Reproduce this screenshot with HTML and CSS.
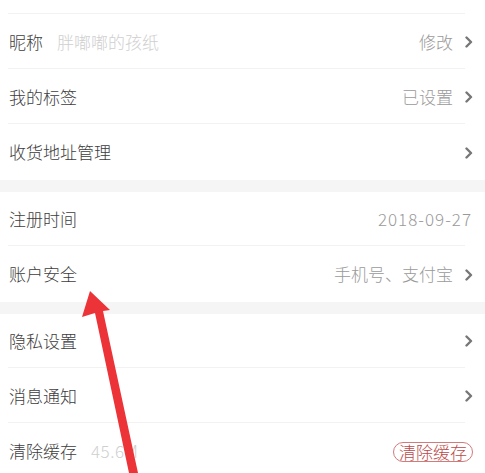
FILE: index.html
```html
<!DOCTYPE html>
<html>
<head>
    <meta charset="utf-8">
    <meta name="viewport" content="width=device-width, initial-scale=1.0">
    <title>个人资料</title>
    <link rel="stylesheet" href="styles.css">
</head>
<body>
<div class="wrap">
    <div class="group">
        <div class="row row-tail"></div>
        <div class="row">
            <span class="label">昵称</span>
            <span class="hint">胖嘟嘟的孩纸</span>
            <span class="value">修改</span>
            <svg class="arrow" viewBox="0 0 8 12"><polyline points="1.5,1.5 6,6 1.5,10.5"/></svg>
        </div>
        <div class="row">
            <span class="label">我的标签</span>
            <span class="value">已设置</span>
            <svg class="arrow" viewBox="0 0 8 12"><polyline points="1.5,1.5 6,6 1.5,10.5"/></svg>
        </div>
        <div class="row last">
            <span class="label">收货地址管理</span>
            <span class="value"></span>
            <svg class="arrow" viewBox="0 0 8 12"><polyline points="1.5,1.5 6,6 1.5,10.5"/></svg>
        </div>
    </div>
    <div class="gap"></div>
    <div class="group">
        <div class="row">
            <span class="label">注册时间</span>
            <span class="value date">2018-09-27</span>
        </div>
        <div class="row last">
            <span class="label">账户安全</span>
            <span class="value">手机号、支付宝</span>
            <svg class="arrow" viewBox="0 0 8 12"><polyline points="1.5,1.5 6,6 1.5,10.5"/></svg>
        </div>
    </div>
    <div class="gap"></div>
    <div class="group">
        <div class="row">
            <span class="label">隐私设置</span>
            <span class="value"></span>
            <svg class="arrow" viewBox="0 0 8 12"><polyline points="1.5,1.5 6,6 1.5,10.5"/></svg>
        </div>
        <div class="row">
            <span class="label">消息通知</span>
            <span class="value"></span>
            <svg class="arrow" viewBox="0 0 8 12"><polyline points="1.5,1.5 6,6 1.5,10.5"/></svg>
        </div>
        <div class="row last">
            <span class="label">清除缓存</span>
            <span class="hint num">45.6M</span>
            <span class="value"></span>
            <span class="clear-btn">清除缓存</span>
        </div>
    </div>

    <!-- 标注箭头 -->
    <svg class="mark" viewBox="0 0 485 473">
        <polygon points="90,291 82,317 95,313 129,473 138,473 103,311 110,310"/>
    </svg>
</div>
</body>
</html>
```

FILE: styles.css
```css
html, body {
    margin: 0;
    padding: 0;
    height: 100%;
    overflow: hidden;
}

body {
    background: #fff;
    color: #3d3d3d;
    font: 300 17px/1.3 "Noto Sans CJK SC", "Noto Sans", sans-serif;
}

.wrap {
    position: relative;
    width: 485px;
}

.group {
    background: #fff;
}

.gap {
    height: 12px;
    background: #f5f5f5;
}

.row {
    display: flex;
    align-items: center;
    height: 54px;
    padding: 0 12px 0 9px;
    border-bottom: 1px solid transparent;
    background: linear-gradient(#f2f2f2, #f2f2f2) no-repeat 8px 100% / calc(100% - 28px) 1px;
}

.row.last {
    height: 55px;
    border-bottom: 0;
    background: none;
}

.row-tail {
    height: 14px;
}

.label {
    color: #3d3d3d;
}

.hint {
    margin-left: 14px;
    color: #cfcfcf;
}

.hint.num {
    letter-spacing: 0.5px;
}

.value {
    flex: 1;
    text-align: right;
    color: #9a9a9a;
}

.value.date {
    margin-right: 1px;
    letter-spacing: 1px;
}

.arrow {
    width: 8px;
    height: 12px;
    margin-left: 12px;
    fill: none;
    stroke: #777;
    stroke-width: 2.4;
    stroke-linecap: round;
    stroke-linejoin: round;
}

.clear-btn {
    display: inline-block;
    height: 18px;
    padding: 0 5px;
    border: 1px solid #d37a7a;
    border-radius: 10px;
    color: #b94a4a;
    font-size: 17px;
    line-height: 18px;
}

.mark {
    position: absolute;
    top: 0;
    left: 0;
    width: 485px;
    height: 473px;
    pointer-events: none;
    fill: #ec3338;
}
```
